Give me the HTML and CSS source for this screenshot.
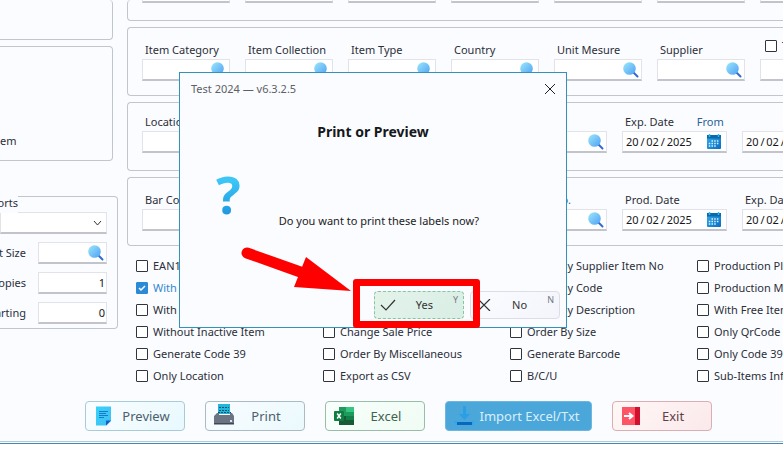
FILE: index.html
```html
<!DOCTYPE html>
<html lang="en">
<head>
<meta charset="utf-8">
<title>Print Labels</title>
<link rel="stylesheet" href="styles.css">
</head>
<body>
<svg class="defs" aria-hidden="true">
  <defs>
    <linearGradient id="glass" x1="0" y1="0" x2="1" y2="1"><stop offset="0" stop-color="#9ce8fb"/><stop offset="1" stop-color="#4fa0f5"/></linearGradient>
    <linearGradient id="cal" x1="0" y1="0" x2="1" y2="1"><stop offset="0" stop-color="#35aee6"/><stop offset="1" stop-color="#0a6cc4"/></linearGradient>
    <linearGradient id="page" x1="0" y1="0" x2="1" y2="1"><stop offset="0" stop-color="#34d3f8"/><stop offset="1" stop-color="#45bdf3"/></linearGradient>
    <symbol id="i-search" viewBox="0 0 16 16"><path d="M10.500 10.500L14.500 14.500" stroke="#2f6bd0" stroke-width="2" stroke-linecap="round"/><circle cx="6.500" cy="6.500" r="6.300" fill="url(#glass)"/></symbol>
    <symbol id="i-calendar" viewBox="0 0 14 15"><rect y="1" width="14" height="14" rx="1" fill="url(#cal)"/><path d="M0 1h14v3.500H0z" fill="#0b69ae"/><path d="M2.500 0v3M11.500 0v3" stroke="#35b5ee" stroke-width="1.500"/><path d="M4.500 7h8M1.800 9.500h10.700M1.800 12h8" stroke="#d8f3ff" stroke-width="1.500" stroke-dasharray="1.500 1.200"/></symbol>
  </defs>
</svg>
<main class="app">
  <div class="workspace">
    <aside class="side">
      <section class="panel side-top"></section>
      <section class="panel side-mid"><span>em</span></section>
      <fieldset class="panel reports">
        <legend>orts</legend>
        <select class="field" aria-label="Reports"><option></option></select>
        <div class="row"><label for="size">t Size</label><span class="field"><input id="size"><svg class="search"><use href="#i-search"/></svg></span></div>
        <div class="row"><label for="copies">opies</label><span class="field"><input id="copies" class="num" value="1"></span></div>
        <div class="row"><label for="start">arting</label><span class="field"><input id="start" class="num" value="0"></span></div>
      </fieldset>
    </aside>
    <div class="content">
      <section class="panel filters first">
        <span class="field"></span><span class="field"></span><span class="field"></span><span class="field"></span><span class="field"></span><span class="field"></span><span class="field"></span>
      </section>
      <section class="panel filters">
        <div class="cell"><label for="f1">Item Category</label><span class="field"><input id="f1"><svg class="search"><use href="#i-search"/></svg></span></div>
        <div class="cell"><label for="f2">Item Collection</label><span class="field"><input id="f2"><svg class="search"><use href="#i-search"/></svg></span></div>
        <div class="cell"><label for="f3">Item Type</label><span class="field"><input id="f3"><svg class="search"><use href="#i-search"/></svg></span></div>
        <div class="cell"><label for="f4">Country</label><span class="field"><input id="f4"><svg class="search"><use href="#i-search"/></svg></span></div>
        <div class="cell"><label for="f5">Unit Mesure</label><span class="field"><input id="f5"><svg class="search"><use href="#i-search"/></svg></span></div>
        <div class="cell"><label for="f6">Supplier</label><span class="field"><input id="f6"><svg class="search"><use href="#i-search"/></svg></span></div>
        <div class="cell"><label class="check raised"><input type="checkbox">T</label><span class="field"><input aria-label="T"></span></div>
      </section>
      <section class="panel filters wide dates">
        <div class="cell"><label for="g1">Location</label><span class="field"><input id="g1"></span></div>
        <div class="cell"><span class="field"></span></div>
        <div class="cell"><span class="field"></span></div>
        <div class="cell"><span class="field"><input aria-label="Lookup"><svg class="search"><use href="#i-search"/></svg></span></div>
        <div class="cell"><label for="g2">Exp. Date <a href="#">From</a></label><span class="field"><input id="g2" value="20&#8201;/&#8201;02&#8201;/&#8201;2025"><svg class="calendar"><use href="#i-calendar"/></svg></span></div>
        <div class="cell"><span class="field"><input aria-label="To date" value="20&#8201;/&#8201;02&#8201;/&#8201;2025"></span></div>
      </section>
      <section class="panel filters wide">
        <div class="cell"><label for="h1">Bar Code</label><span class="field"><input id="h1"></span></div>
        <div class="cell"><span class="field"></span></div>
        <div class="cell"><span class="field"></span></div>
        <div class="cell"><label class="ref" for="h2">Supplier No.</label><span class="field"><input id="h2"><svg class="search"><use href="#i-search"/></svg></span></div>
        <div class="cell"><label for="h3">Prod. Date</label><span class="field"><input id="h3" value="20&#8201;/&#8201;02&#8201;/&#8201;2025"><svg class="calendar"><use href="#i-calendar"/></svg></span></div>
        <div class="cell"><label for="h4">Exp. Date</label><span class="field"><input id="h4" value="20&#8201;/&#8201;02&#8201;/&#8201;2025"></span></div>
      </section>
      <section class="options">
        <label class="check"><input type="checkbox">EAN13</label>
        <label class="check"><input type="checkbox">Price</label>
        <label class="check"><input type="checkbox">Order By Supplier Item No</label>
        <label class="check"><input type="checkbox">Production Plus</label>
        <label class="check on"><input type="checkbox" checked>With</label>
        <label class="check"><input type="checkbox">Price</label>
        <label class="check"><input type="checkbox">Order By Code</label>
        <label class="check"><input type="checkbox">Production Minus</label>
        <label class="check"><input type="checkbox">With</label>
        <label class="check"><input type="checkbox">Price</label>
        <label class="check"><input type="checkbox">Order By Description</label>
        <label class="check"><input type="checkbox">With Free Items</label>
        <label class="check"><input type="checkbox">Without Inactive Item</label>
        <label class="check"><input type="checkbox">Change Sale Price</label>
        <label class="check"><input type="checkbox">Order By Size</label>
        <label class="check"><input type="checkbox">Only QrCode</label>
        <label class="check"><input type="checkbox">Generate Code 39</label>
        <label class="check"><input type="checkbox">Order By Miscellaneous</label>
        <label class="check"><input type="checkbox">Generate Barcode</label>
        <label class="check"><input type="checkbox">Only Code 39</label>
        <label class="check"><input type="checkbox">Only Location</label>
        <label class="check"><input type="checkbox">Export as CSV</label>
        <label class="check"><input type="checkbox">B/C/U</label>
        <label class="check"><input type="checkbox">Sub-Items Info</label>
      </section>
    </div>
  </div>
  <footer class="actions">
    <button class="btn preview"><svg viewBox="0 0 22 22"><path d="M2 1.500h15V16l-4.500 4.500H2z" fill="url(#page)"/><path d="M17 15.500l-5 5v-5z" fill="#1560c4"/><path d="M5 6.500h9M5 8.500h7M5 10.500h9M5 12.500h5" stroke="#1878c9" stroke-width="1"/></svg><span>Preview</span></button>
    <button class="btn print"><svg viewBox="0 0 22 22"><path d="M4 -1h12v10H4z" fill="#25b4da"/><path d="M5 2.500h10M5 5.500h10M4 7.500h13" stroke="#07566f" stroke-dasharray="2 1"/><path d="M3 8h2v2h11V8h2l2 3v7H0v-7z" fill="#6b7480"/><path d="M0 18h20v1.500H0z" fill="#404854"/><path d="M16 15h2v2h-2z" fill="#dbe5ea"/></svg><span>Print</span></button>
    <button class="btn excel"><svg viewBox="0 0 22 22"><path d="M5 2h15v18H5z" fill="#1f9a5d"/><path d="M12 2h8v5h-8z" fill="#35c481"/><path d="M5 11h7v9H5z" fill="#175c37"/><path d="M12 11h8v4h-8z" fill="#128048"/><path d="M5 15h15v5H5z" fill="#185c37"/><rect y="6" width="10" height="10" rx="1" fill="#107c41"/><path d="M3.200 8.500l3.600 5M6.800 8.500l-3.600 5" stroke="#fff" stroke-width="1.500"/></svg><span>Excel</span></button>
    <button class="btn import"><svg viewBox="0 0 22 22"><path d="M9 1h3v8h4l-5.500 6L5 9h4z" fill="#29a0e6"/><path d="M0 16h3v3h15v-3h3l-2 4H2z" fill="#29a9ee"/><path d="M3 17h15v3H3z" fill="#0868c0"/></svg><span>Import Excel/Txt</span></button>
    <button class="btn exit"><svg viewBox="0 0 22 22"><path d="M1 2h13v18H1z" fill="#ff5468"/><path d="M14 2h5v18h-5z" fill="#d0112d"/><path d="M3 11h8M8 8l3.500 3L8 14" fill="none" stroke="#fff" stroke-width="2"/></svg><span>Exit</span></button>
  </footer>
  <div class="dialog" role="dialog" aria-labelledby="dlg-title">
    <header><span>Test 2024 — v6.3.2.5</span><button class="close" aria-label="Close"><svg viewBox="0 0 10 10"><path d="M0 0l10 10M10 0L0 10" stroke="#222" stroke-width="1"/></svg></button></header>
    <h1 id="dlg-title">Print or Preview</h1>
    <div class="message"><span class="mark">?</span><p>Do you want to print these labels now?</p></div>
    <div class="choices">
      <button class="choice yes"><svg viewBox="0 0 16 12"><path d="M1 6l5 5L15 1" fill="none" stroke="#333" stroke-width="1.200"/></svg><span>Yes</span><kbd>Y</kbd></button>
      <button class="choice no"><svg viewBox="0 0 16 12"><path d="M2 0l12 12M14 0L2 12" fill="none" stroke="#333" stroke-width="1.200"/></svg><span>No</span><kbd>N</kbd></button>
    </div>
  </div>
  <svg class="arrow" viewBox="0 0 120 50" aria-hidden="true"><path d="M11 7L70 28" stroke="#f00" stroke-width="11" stroke-linecap="round"/><path d="M70 11L115 45L58 41z" fill="#f00"/></svg>
  <div class="highlight"></div>
</main>
</body>
</html>
```
FILE: styles.css
```css
* { box-sizing: border-box; }
body {
  margin: 0;
  background: #fff;
  color: #2b2f38;
  font: 11px/16px "Noto Sans", "Open Sans", sans-serif;
  overflow: hidden;
}
input, button, select { font: inherit; color: inherit; }
.defs { position: absolute; width: 0; height: 0; }
.app {
  position: relative;
  background: #fbfcff;
  border-bottom: 1px solid #4688a8;
  overflow: hidden;
}
.workspace { display: grid; grid-template-columns: 118px 1fr; gap: 9px; }
.panel { margin: 0; border: 1px solid #c3c5cd; border-radius: 4px; }

.side .panel { border-left: 0; border-radius: 0 4px 4px 0; }
.side .side-top { height: 40px; border-top: 0; margin-right: 5px; }
.side .side-mid { height: 115px; margin: 6px 5px 0 0; padding-top: 86px; }
.side-mid span { display: block; width: 10px; }
.side .reports { position: relative; margin-top: 35px; padding: 15px 10px 4px 0; min-width: 0; }
.reports legend { position: absolute; top: -2px; left: 0; width: 18px; height: 18px; padding: 0; background: #fbfcff; direction: rtl; overflow: hidden; }
select.field { appearance: none; width: 100%; padding: 0; background: #fff url("data:image/svg+xml,%3Csvg xmlns='http://www.w3.org/2000/svg' width='9' height='6'%3E%3Cpath d='M1 1l3.500 4L8 1' fill='none' stroke='%23333'/%3E%3C/svg%3E") no-repeat right 4px center; border-radius: 0; }
.row { display: flex; justify-content: flex-end; align-items: center; gap: 12px; margin-top: 8px; white-space: nowrap; }
.row .field { flex: none; width: 69px; }

.field {
  display: flex;
  align-items: center;
  height: 22px;
  background: #fff;
  border: 1px solid #e2e3e8;
  border-bottom: 2px solid #c3c4cb;
}
.field input { flex: 1; min-width: 0; height: 19px; padding: 0 0 0 3px; border: 0; outline: 0; background: none; color: #15171c; }
.field .num { text-align: right; padding: 0 1px; }
.search { flex: none; width: 16px; height: 16px; margin-right: 2px; }
.calendar { flex: none; width: 14px; height: 15px; margin-right: 5px; }

.content { display: grid; gap: 6px; align-content: start; min-width: 0; }
.content .panel { border-right: 0; border-radius: 4px 0 0 4px; padding: 14px 0 14px 14px; height: 69px; }
.content .dates { padding: 11px 0 17px 14px; }
.filters { display: grid; grid-auto-flow: column; grid-auto-columns: 88px; gap: 15px; overflow: hidden; justify-content: start; }
.content .first { height: 21px; padding: 0 0 17px 14px; border-top: 0; }
.content .first .field { height: 3px; border-top: 0; }
.content .wide { grid-auto-columns: 105px; }
.cell { display: flex; flex-direction: column; justify-content: flex-end; gap: 1px; min-width: 0; white-space: nowrap; }
.cell label { padding-left: 3px; }
.cell a { color: #2b6098; text-decoration: none; margin-left: 20px; }
.cell .ref { text-align: right; padding: 0 36px 0 0; color: #2b6098; }
.cell .raised { height: 16px; padding: 0 0 8px 5px; }

.options { display: grid; grid-template-columns: repeat(4, 187px); padding: 3px 0 0 9px; }
.check { display: flex; align-items: center; gap: 5px; height: 22px; white-space: nowrap; }
.check input { appearance: none; flex: none; width: 12px; height: 12px; margin: 0; border: 1px solid #30343d; border-radius: 1px; background: #fff; }
.check input:checked { border-color: #2b8ad6; background: #2b8ad6 url("data:image/svg+xml,%3Csvg xmlns='http://www.w3.org/2000/svg' width='10' height='10'%3E%3Cpath d='M2 5l2 2 4-4' fill='none' stroke='white' stroke-width='1.500'/%3E%3C/svg%3E") center no-repeat; }
.check.on { color: #3189cf; }

.actions { display: flex; gap: 20px; padding: 14px 0 10px 85px; border-bottom: 1px solid #b4cbd6; margin-bottom: 1px; }
.btn { display: flex; align-items: center; width: 100px; height: 30px; padding: 0 8px; border: 1px solid #a9cbd6; border-radius: 4px; font-size: 13px; color: #4c606d; white-space: nowrap; }
.btn svg { flex: none; width: 22px; height: 22px; overflow: visible; }
.btn span { flex: 1; text-align: center; }
.preview { background: linear-gradient(135deg, #fafdff, #e8f9fd); }
.print { border-color: #aabbc4; background: linear-gradient(135deg, #fafdff, #eaf9fd); }
.excel { border-color: #9cbcab; background: linear-gradient(135deg, #f8fffb, #effcf4); color: #446252; }
.import { width: 147px; border-color: #6db6e0; background: #4ba6da; color: #d8effb; }
.exit { border-color: #dbaeb5; background: linear-gradient(135deg, #fff7f7, #fbe9ea); color: #613f49; }

.dialog {
  position: absolute;
  top: 72px;
  left: 179px;
  width: 388px;
  padding: 8px 6px;
  display: flex;
  flex-direction: column;
  background: #fbfcff;
  border: 1px solid #3292b8;
}
.dialog header { display: flex; justify-content: space-between; align-items: center; padding: 0 11px 0 10px; color: #5d6067; }
.dialog header { padding: 0 5px; }
.close { width: 10px; height: 10px; padding: 0; border: 0; background: none; display: flex; }
.dialog h1 { margin: 25px 0 0; font-size: 14px; line-height: 20px; text-align: center; color: #16181c; }
.message { display: flex; gap: 38px; padding: 22px 0 0 30px; height: 108px; }
.mark { font: bold 52px/60px "Open Sans", sans-serif; background: linear-gradient(#3cc5f5 20%, #0f7fd4 80%); background-clip: text; color: transparent; }
.message p { margin: 49px 0 0; color: #222; }
.choices { display: flex; gap: 6px; justify-content: flex-end; margin-top: 41px; }
.choice { position: relative; display: flex; align-items: center; width: 90px; height: 28px; padding: 0 5px; border: 1px solid #dcdde6; border-radius: 4px; background: linear-gradient(135deg, #fbfcff, #f3f5fc); color: #333; }
.choice svg { flex: none; width: 16px; height: 12px; }
.choice span { flex: 1; text-align: center; }
.choice kbd { align-self: flex-start; font: 9px/16px "Noto Sans", sans-serif; color: #74787e; }
.yes { border: 1px dashed #85c59f; background: linear-gradient(135deg, #e3f3ea, #d9eee6); }
.arrow { position: absolute; left: 236px; top: 246px; width: 120px; height: 50px; }
.highlight { position: absolute; left: 353px; top: 279px; width: 127px; height: 49px; border: 7px solid #f00; border-radius: 3px; }
```
